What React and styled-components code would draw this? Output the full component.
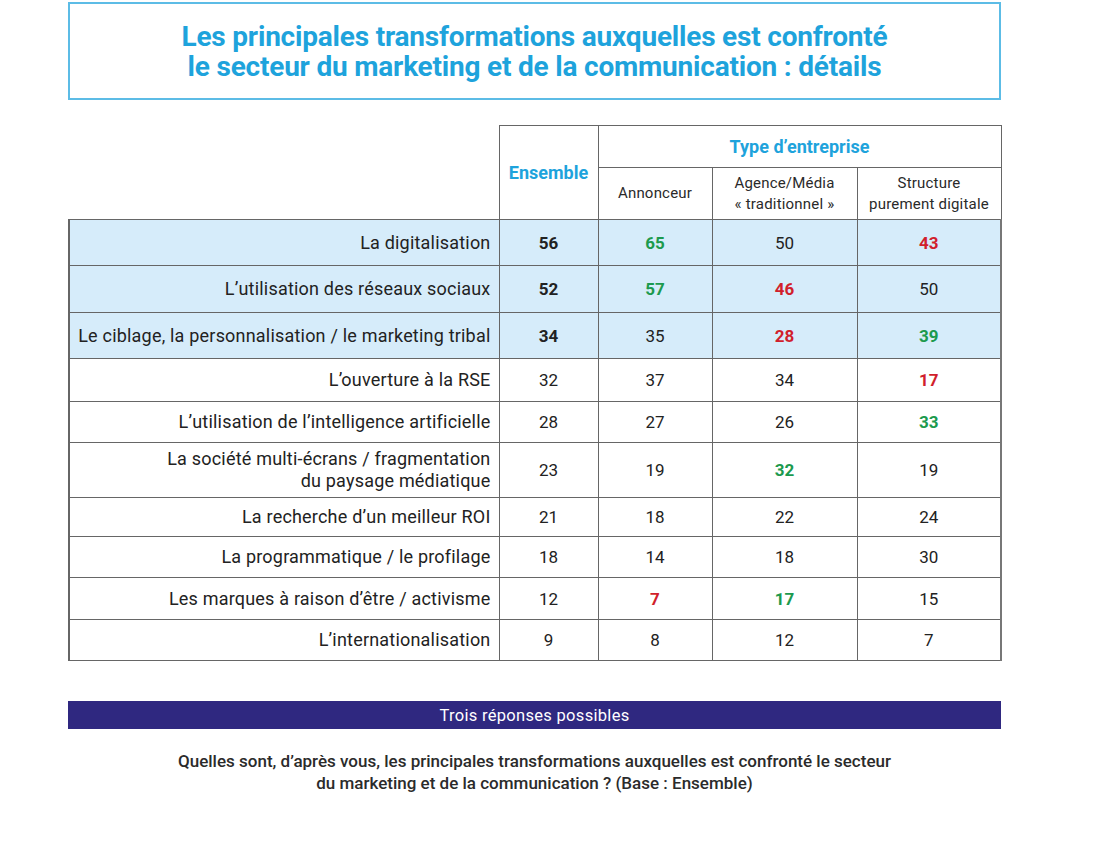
import React from 'react';
import styled, { createGlobalStyle } from 'styled-components';

const GlobalStyle = createGlobalStyle`
  body {
    margin: 0;
    background: #ffffff;
    font-family: Roboto, "Liberation Sans", sans-serif;
    color: #222;
  }
`;

const rows = [
  { label: 'La digitalisation', ens: 56, vals: [[65, 'up'], [50], [43, 'down']], hl: true },
  { label: 'L\u2019utilisation des réseaux sociaux', ens: 52, vals: [[57, 'up'], [46, 'down'], [50]], hl: true, h: 47 },
  { label: 'Le ciblage, la personnalisation / le marketing tribal', ens: 34, vals: [[35], [28, 'down'], [39, 'up']], hl: true },
  { label: 'L\u2019ouverture à la RSE', ens: 32, vals: [[37], [34], [17, 'down']], h: 43 },
  { label: 'L\u2019utilisation de l\u2019intelligence artificielle', ens: 28, vals: [[27], [26], [33, 'up']] },
  { label: ['La société multi-écrans / fragmentation', 'du paysage médiatique'], ens: 23, vals: [[19], [32, 'up'], [19]], h: 55 },
  { label: 'La recherche d\u2019un meilleur ROI', ens: 21, vals: [[18], [22], [24]], h: 39 },
  { label: 'La programmatique / le profilage', ens: 18, vals: [[14], [18], [30]] },
  { label: 'Les marques à raison d\u2019être / activisme', ens: 12, vals: [[7, 'down'], [17, 'up'], [15]], h: 42 },
  { label: 'L\u2019internationalisation', ens: 9, vals: [[8], [12], [7]] },
];

function App() {
  return (
    <Page>
      <GlobalStyle />
      <TitleBox>
        <Title>
          Les principales transformations auxquelles est confronté
          <br />
          le secteur du marketing et de la communication : détails
        </Title>
      </TitleBox>

      <Table>
        <colgroup>
          <col style={{ width: 430 }} />
          <col style={{ width: 99 }} />
          <col style={{ width: 114 }} />
          <col style={{ width: 145 }} />
          <col style={{ width: 144 }} />
        </colgroup>
        <thead>
          <tr>
            <EmptyHead rowSpan={2} />
            <GroupHead rowSpan={2}>Ensemble</GroupHead>
            <GroupHead colSpan={3}>Type d’entreprise</GroupHead>
          </tr>
          <tr>
            <SubHead>Annonceur</SubHead>
            <SubHead>Agence/Média<br />« traditionnel »</SubHead>
            <SubHead>Structure<br />purement digitale</SubHead>
          </tr>
        </thead>
        <tbody>
          {rows.map((r, i) => (
            <Row key={i} $hl={r.hl} $h={r.h || (r.hl ? 46 : 41)}>
              <Label>
                {Array.isArray(r.label) ? (<>{r.label[0]}<br />{r.label[1]}</>) : r.label}
              </Label>
              <Num $strong={r.hl}>{r.ens}</Num>
              {r.vals.map((v, j) => (
                <Num key={j} $tone={v[1]}>{v[0]}</Num>
              ))}
            </Row>
          ))}
        </tbody>
      </Table>

      <Banner>Trois réponses possibles</Banner>

      <Question>
        Quelles sont, d’après vous, les principales transformations auxquelles est confronté le secteur
        <br />
        du marketing et de la communication ? (Base : Ensemble)
      </Question>
    </Page>
  );
}

const Page = styled.div`
  width: 933px;
  margin-left: 68px;
  padding-top: 2px;
`;

const TitleBox = styled.div`
  height: 98px;
  box-sizing: border-box;
  border: 2px solid #5cbce6;
  display: flex;
  align-items: center;
  justify-content: center;
`;

const Title = styled.h1`
  margin: 0;
  padding-top: 2px;
  font-family: Roboto, "Liberation Sans", sans-serif;
  font-weight: 700;
  font-size: 28px;
  line-height: 30px;
  letter-spacing: -0.2px;
  color: #1ea3dc;
  text-align: center;
`;

const Table = styled.table`
  margin-top: 25px;
  width: 932px;
  border-collapse: collapse;
  table-layout: fixed;
  font-family: Roboto, "Liberation Sans", sans-serif;
`;

const EmptyHead = styled.th`
  border: none;
  border-right: 1px solid #666;
`;

const GroupHead = styled.th`
  border: 1px solid #666;
  color: #1ea3dc;
  font-weight: 700;
  font-size: 18px;
  height: 41px;
  padding: 0;
  text-align: center;
`;

const SubHead = styled.th`
  border: 1px solid #666;
  font-weight: 400;
  font-size: 15px;
  line-height: 21px;
  letter-spacing: 0.2px;
  color: #2a2a2a;
  height: 51px;
  padding: 0;
  text-align: center;
`;

const Row = styled.tr`
  height: ${p => p.$h}px;
  background: ${p => (p.$hl ? '#d6ecfa' : '#ffffff')};
`;

const Label = styled.td`
  border: 1px solid #666;
  border-left: 2px solid #666;
  text-align: right;
  padding: 0 8px 0 4px;
  font-size: 18px;
  line-height: 22px;
  letter-spacing: 0.2px;
  color: #222;
`;

const toneColor = { up: '#1c9a4e', down: '#d11f2c' };

const Num = styled.td`
  border: 1px solid #666;
  text-align: center;
  padding: 0;
  font-size: 17px;
  font-weight: ${p => (p.$strong || p.$tone ? 700 : 400)};
  color: ${p => toneColor[p.$tone] || '#222'};

  &:last-child {
    border-right: 2px solid #777;
  }
`;

const Banner = styled.div`
  margin-top: 40px;
  height: 28px;
  background: #2f2880;
  color: #ffffff;
  display: flex;
  align-items: center;
  justify-content: center;
  font-family: Roboto, "Liberation Sans", sans-serif;
  font-size: 16.5px;
  letter-spacing: 0.3px;
`;

const Question = styled.p`
  margin: 21px 0 0;
  text-align: center;
  font-family: Roboto, "Liberation Sans", sans-serif;
  font-size: 17px;
  line-height: 22px;
  color: #2b2b2b;
  font-weight: 500;
`;

export default App;
